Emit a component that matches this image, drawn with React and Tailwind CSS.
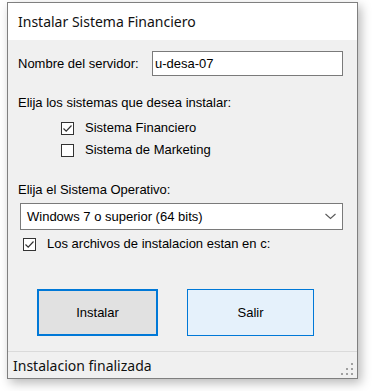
import React from "react";

function CheckBox({ checked }) {
  return (
    <span className="w-[13px] h-[13px] border border-[#333333] bg-white flex items-center justify-center shrink-0">
      {checked && (
        <svg width="11" height="11" viewBox="0 0 11 11">
          <polyline points="1.5,5.5 4.2,8.2 9.5,2.5" fill="none" stroke="#333333" strokeWidth="1.2" />
        </svg>
      )}
    </span>
  );
}

export default function App() {
  const label = { fontFamily: '"Liberation Sans", Arial, sans-serif' };
  const ui = { fontFamily: '"Noto Sans", "Open Sans", sans-serif' };

  return (
    <div className="w-[373px] h-[391px] bg-white pt-[2px] pl-[7px]">
      <div className="w-[351px] h-[377px] border border-[#7f7f7f] flex flex-col shadow-[3px_4px_10px_rgba(0,0,0,0.28)]">
        {/* title bar */}
        <div className="h-[37px] bg-white flex items-center pl-[10px] text-[14px] text-[#111]" style={ui}>
          Instalar Sistema Financiero
        </div>

        {/* body */}
        <div className="flex-1 bg-[#f0f0f0] flex flex-col text-[13px] text-black" style={label}>
          <div className="mt-[11px] h-[25px] flex items-center">
            <span className="ml-[10px] w-[134px]">Nombre del servidor:</span>
            <div className="w-[191px] h-[25px] bg-white border border-[#7a7a7a] flex items-center pl-[2px]">
              u-desa-07
            </div>
          </div>

          <div className="mt-[19px] h-[16px] flex items-center pl-[10px]">
            Elija los sistemas que desea instalar:
          </div>

          <div className="mt-[9px] h-[16px] flex items-center pl-[53px] gap-[11px]">
            <CheckBox checked />
            <span>Sistema Financiero</span>
          </div>
          <div className="mt-[6px] h-[16px] flex items-center pl-[53px] gap-[11px]">
            <CheckBox />
            <span>Sistema de Marketing</span>
          </div>

          <div className="mt-[24px] h-[16px] flex items-center pl-[10px]">
            Elija el Sistema Operativo:
          </div>

          <div className="mt-[5px] ml-[12px] w-[323px] h-[27px] bg-white border border-[#7a7a7a] flex items-center justify-between pl-[6px] pr-[6px]">
            <span>Windows 7 o superior (64 bits)</span>
            <svg width="11" height="7" viewBox="0 0 11 7">
              <polyline points="0.5,1 5.5,5.5 10.5,1" fill="none" stroke="#5a5a5a" strokeWidth="1.1" />
            </svg>
          </div>

          <div className="mt-[6px] h-[16px] flex items-center pl-[15px] gap-[11px]">
            <CheckBox checked />
            <span>Los archivos de instalacion estan en c:</span>
          </div>

          <div className="mt-[37px] flex items-center pl-[29px] gap-[29px]">
            <button className="w-[121px] h-[47px] bg-[#e1e1e1] border-2 border-[#0078d7] text-[13px]">
              Instalar
            </button>
            <button className="w-[127px] h-[47px] bg-[#e5f1fb] border border-[#0078d7] text-[13px]">
              Salir
            </button>
          </div>
        </div>

        {/* status bar */}
        <div className="h-[27px] bg-[#f0f0f0] border-t border-[#dadada] flex items-center justify-between pl-[5px] pr-[3px]">
          <span className="text-[14px] text-[#111]" style={ui}>Instalacion finalizada</span>
          <svg width="14" height="14" viewBox="0 0 14 14" className="self-end mb-[2px]">
            <rect x="11" y="1" width="2" height="2" fill="#a0a0a0" />
            <rect x="6" y="6" width="2" height="2" fill="#a0a0a0" />
            <rect x="11" y="6" width="2" height="2" fill="#a0a0a0" />
            <rect x="1" y="11" width="2" height="2" fill="#a0a0a0" />
            <rect x="6" y="11" width="2" height="2" fill="#a0a0a0" />
            <rect x="11" y="11" width="2" height="2" fill="#a0a0a0" />
          </svg>
        </div>
      </div>
    </div>
  );
}
